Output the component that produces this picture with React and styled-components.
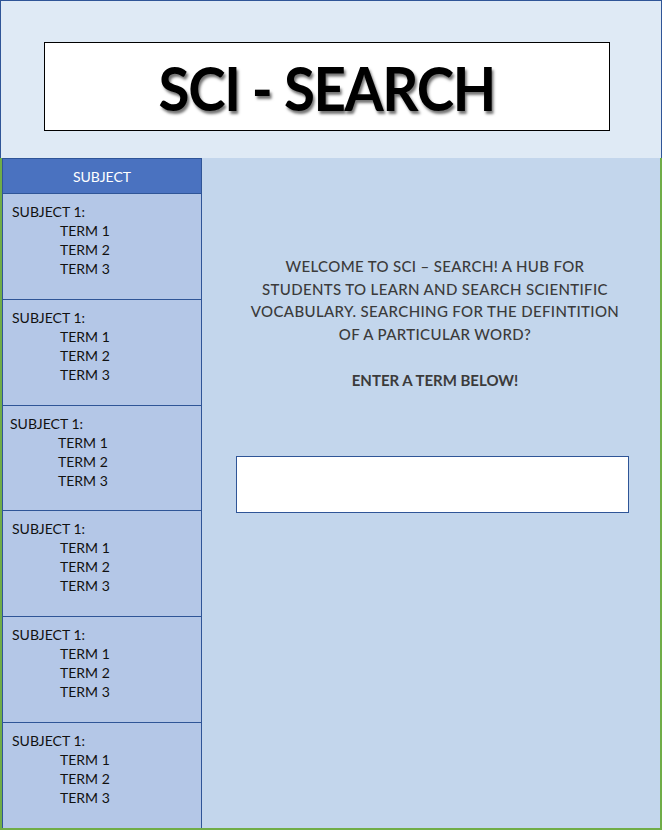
import React from 'react'
import styled, { createGlobalStyle } from 'styled-components'

const GlobalStyle = createGlobalStyle`
  * { box-sizing: border-box; }
  body {
    margin: 0;
    font-family: Lato, "Open Sans", sans-serif;
    background: #ffffff;
  }
`

const subjects = [0, 1, 2, 3, 4, 5]

export default function App() {
  return (
    <>
      <GlobalStyle />
      <Page>
        <Header>
          <TitleBox>
            <Title>SCI - SEARCH</Title>
          </TitleBox>
        </Header>
        <Body>
          <Sidebar>
            <SidebarHead>SUBJECT</SidebarHead>
            {subjects.map((i) => (
              <SubjectItem key={i} $shift={i === 2}>
                <SubjectName>SUBJECT 1:</SubjectName>
                <TermList>
                  <Term>TERM 1</Term>
                  <Term>TERM 2</Term>
                  <Term>TERM 3</Term>
                </TermList>
              </SubjectItem>
            ))}
          </Sidebar>
          <Main>
            <Welcome>
              WELCOME TO SCI – SEARCH! A HUB FOR<br />
              STUDENTS TO LEARN AND SEARCH SCIENTIFIC<br />
              VOCABULARY. SEARCHING FOR THE DEFINTITION<br />
              OF A PARTICULAR WORD?
            </Welcome>
            <Prompt>ENTER A TERM BELOW!</Prompt>
            <SearchBox type="text" aria-label="Search term" />
          </Main>
        </Body>
      </Page>
    </>
  )
}

const Page = styled.div`
  width: 662px;
  height: 830px;
  display: flex;
  flex-direction: column;
`

const Header = styled.header`
  height: 160px;
  background: #dfeaf5;
  border: 1px solid #2f5597;
  border-bottom-width: 2px;
  padding: 41px 51px 0 43px;
`

const TitleBox = styled.div`
  height: 89px;
  background: #ffffff;
  border: 1px solid #000000;
  display: flex;
  align-items: center;
  justify-content: center;
`

const Title = styled.h1`
  margin: 0;
  font-family: Lato, "Open Sans", sans-serif;
  font-weight: 700;
  font-size: 62px;
  letter-spacing: -1.5px;
  transform: scaleX(0.91);
  color: #000000;
  text-shadow: 2px 3px 3px rgba(0, 0, 0, 0.55);
`

const Body = styled.div`
  flex: 1;
  display: flex;
  margin-top: -2px;
  border: 2px solid #70ad47;
  border-top: none;
`

const Sidebar = styled.nav`
  width: 200px;
  display: flex;
  flex-direction: column;
  background: #b4c7e7;
  border-right: 1px solid #2f5597;
  border-left: 1px solid #2f5597;
`

const SidebarHead = styled.div`
  height: 36px;
  background: #4a72c0;
  border-top: 1px solid #2f5597;
  border-bottom: 1px solid #2f5597;
  color: #ffffff;
  font-size: 14px;
  display: flex;
  align-items: center;
  justify-content: center;
`

const SubjectItem = styled.div`
  flex: 1;
  padding: 9px 0 0 ${(p) => (p.$shift ? '7px' : '9px')};
  border-bottom: 1px solid #2f5597;
  font-size: 14px;
  color: #111111;
  &:last-child {
    border-bottom: none;
  }
`

const SubjectName = styled.div`
  line-height: 18px;
`

const TermList = styled.div`
  padding-left: 48px;
`

const Term = styled.div`
  line-height: 19px;
`

const Main = styled.main`
  flex: 1;
  background: #c3d6ec;
  display: flex;
  flex-direction: column;
  align-items: center;
  padding-top: 97px;
  padding-left: 8px;
`

const Welcome = styled.p`
  margin: 0;
  text-align: center;
  font-size: 15px;
  line-height: 22.5px;
  letter-spacing: 0.35px;
  color: #3b3b3b;
  font-weight: 500;
`

const Prompt = styled.p`
  margin: 24px 0 0 0;
  text-align: center;
  font-size: 15px;
  line-height: 22px;
  color: #3b3b3b;
  font-weight: 700;
`

const SearchBox = styled.input`
  margin-top: 65px;
  margin-left: -6px;
  width: 393px;
  height: 57px;
  background: #ffffff;
  border: 1px solid #2f5597;
  outline: none;
`
